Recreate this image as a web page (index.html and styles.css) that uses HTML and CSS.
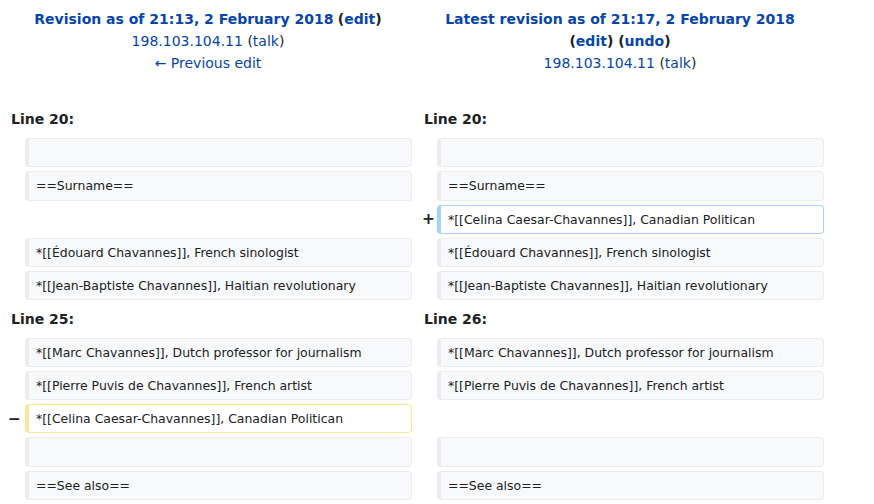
FILE: index.html
```html
<!DOCTYPE html>
<html>
<head>
<meta charset="utf-8">
<link rel="stylesheet" href="styles.css">
</head>
<body>
<div class="diff">
  <div class="title">
    <div><a class="b">Revision as of 21:13, 2 February 2018</a> <b class="b">(<a>edit</a>)</b></div>
    <div><a>198.103.104.11</a> (<a>talk</a>)</div>
    <div><a>← Previous edit</a></div>
  </div>
  <div class="title">
    <div><a class="b">Latest revision as of 21:17, 2 February 2018</a> <b class="b">(<a>edit</a>) (<a>undo</a>)</b></div>
    <div><a>198.103.104.11</a> (<a>talk</a>)</div>
  </div>

  <div class="lineno">Line 20:</div>
  <div class="lineno">Line 20:</div>

  <div class="marker"></div><div class="ctx"></div>
  <div class="marker"></div><div class="ctx"></div>

  <div class="marker"></div><div class="ctx">==Surname==</div>
  <div class="marker"></div><div class="ctx">==Surname==</div>

  <div class="empty"></div>
  <div class="marker plus">+</div><div class="added">*[[Celina Caesar-Chavannes]], Canadian Politican</div>

  <div class="marker"></div><div class="ctx">*[[Édouard Chavannes]], French sinologist</div>
  <div class="marker"></div><div class="ctx">*[[Édouard Chavannes]], French sinologist</div>

  <div class="marker"></div><div class="ctx">*[[Jean-Baptiste Chavannes]], Haitian revolutionary</div>
  <div class="marker"></div><div class="ctx">*[[Jean-Baptiste Chavannes]], Haitian revolutionary</div>

  <div class="lineno">Line 25:</div>
  <div class="lineno">Line 26:</div>

  <div class="marker"></div><div class="ctx">*[[Marc Chavannes]], Dutch professor for journalism</div>
  <div class="marker"></div><div class="ctx">*[[Marc Chavannes]], Dutch professor for journalism</div>

  <div class="marker"></div><div class="ctx">*[[Pierre Puvis de Chavannes]], French artist</div>
  <div class="marker"></div><div class="ctx">*[[Pierre Puvis de Chavannes]], French artist</div>

  <div class="marker minus">−</div><div class="deleted">*[[Celina Caesar-Chavannes]], Canadian Politican</div>
  <div class="empty"></div>

  <div class="marker"></div><div class="ctx"></div>
  <div class="marker"></div><div class="ctx"></div>

  <div class="marker"></div><div class="ctx">==See also==</div>
  <div class="marker"></div><div class="ctx">==See also==</div>
</div>
</body>
</html>
```
FILE: styles.css
```css
html, body {
  margin: 0;
  padding: 0;
  background: #ffffff;
}
body {
  font-family: "DejaVu Sans", sans-serif;
  font-size: 14px;
  color: #202122;
}
.diff {
  display: grid;
  grid-template-columns: 17px 387px 17px 387px;
  grid-template-rows: auto;
  grid-auto-rows: 29.25px;
  column-gap: 4px;
  row-gap: 4px;
  padding: 4px;
  width: 828px;
  box-sizing: border-box;
}
.title {
  grid-column: span 2;
  text-align: center;
  line-height: 22px;
  padding: 4px 12px 26.75px;
}
.b { font-weight: bold; }
a { color: #0645ad; text-decoration: none; }
.lineno {
  grid-column: span 2;
  font-weight: bold;
  padding-left: 7px;
  display: flex;
  align-items: center;
}
.lineno + .lineno { padding-left: 8px; }
.marker {
  font-weight: bold;
  font-size: 15.4px;
  display: flex;
  align-items: center;
  justify-content: flex-end;
}
.plus { margin-right: -2px; }
.empty { grid-column: span 2; }
.ctx, .added, .deleted {
  font-size: 12.45px;
  border: 1px solid #eaecf0;
  border-left-width: 4px;
  border-radius: 4px;
  padding: 0 7px;
  display: flex;
  align-items: center;
  white-space: pre;
  overflow: hidden;
}
.ctx {
  background: #f8f9fa;
  color: #202122;
}
.added {
  background: #ffffff;
  border-color: #a3d3ff;
}
.deleted {
  background: #ffffff;
  border-color: #ffe49c;
}
```
